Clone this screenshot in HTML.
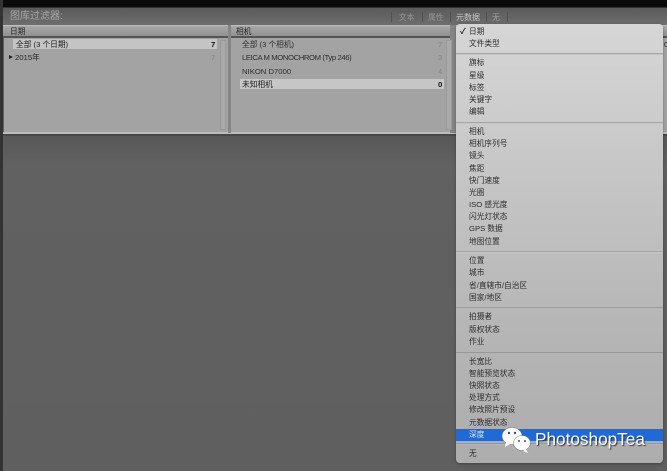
<!DOCTYPE html>
<html lang="zh"><head><meta charset="utf-8"><style>
html,body{margin:0;padding:0;background:#5f5f5f}
#p{position:relative;width:667px;height:471px;overflow:hidden;background:#5f5f5f;font-family:"Liberation Sans","Noto Sans CJK SC",sans-serif;font-size:7.7px;color:#242424}
#p div{position:absolute}
.t{white-space:nowrap;line-height:12px;height:12px;margin-top:1px;filter:blur(.3px)}
.m{left:469px;color:#2c2c2c}
.s{left:456px;width:207px;height:1px;background:#a6a6a6;border-bottom:1px solid #c6c6c6}
</style></head><body><div id="p">
<div style="left:0;top:0;width:667px;height:7px;background:#0a0a0a"></div>
<div style="left:0;top:7px;width:667px;height:1px;background:#333"></div>
<div style="left:0;top:0;width:3px;height:471px;background:#333"></div>
<div style="left:3px;top:8px;width:664px;height:17px;background:linear-gradient(#5a5a5a,#6e6e6e)"></div>
<div style="left:3px;top:25px;width:664px;height:12px;background:linear-gradient(#a8a8a8,#8f8f8f);border-top:1px solid #bcbcbc;box-sizing:border-box"></div>
<div style="left:3px;top:36px;width:664px;height:2px;background:#555"></div>
<div style="left:4px;top:38px;width:663px;height:95px;background:#a3a3a3"></div>
<div style="left:3px;top:132px;width:664px;height:2px;background:#bdbdbd"></div>
<div style="left:3px;top:134px;width:664px;height:2px;background:#484848"></div>
<div style="left:3px;top:136px;width:664px;height:335px;background:linear-gradient(#585858,#616161 30px,#5f5f5f)"></div>
<div style="left:228px;top:25px;width:3px;height:108px;background:#858585"></div>
<div style="left:450px;top:25px;width:6px;height:108px;background:#858585"></div>
<div style="left:220px;top:40px;width:6px;height:90px;background:#aaa;border:1px solid #9a9a9a;box-sizing:border-box"></div>
<div style="left:446px;top:40px;width:6px;height:90px;background:#aaa;border:1px solid #9a9a9a;box-sizing:border-box"></div>
<div class="t" style="left:10px;top:10px;font-size:10px;color:#a8a8a8">图库过滤器:</div>
<div class="t" style="left:399px;top:11px;color:#959595">文本</div>
<div class="t" style="left:428px;top:11px;color:#959595">属性</div>
<div class="t" style="left:456px;top:11px;color:#c8c8c8;font-size:8px">元数据</div>
<div class="t" style="left:492px;top:11px;color:#a0a0a0;font-size:8px">无</div>
<div style="left:391px;top:12px;width:1px;height:10px;background:#505050"></div>
<div style="left:422px;top:12px;width:1px;height:10px;background:#505050"></div>
<div style="left:450px;top:12px;width:1px;height:10px;background:#505050"></div>
<div style="left:486px;top:12px;width:1px;height:10px;background:#505050"></div>
<div style="left:507px;top:12px;width:1px;height:10px;background:#505050"></div>
<div class="t" style="left:10px;top:25px">日期</div>
<div class="t" style="left:236px;top:25px">相机</div>
<div style="left:13px;top:39px;width:204px;height:10px;background:#c4c4c4"></div>
<div class="t" style="left:16px;top:38px;color:#1c1c1c">全部 (3 个日期)</div>
<div class="t" style="left:211px;top:38px;font-weight:bold;color:#111">7</div>
<div style="left:9px;top:55px;width:0;height:0;border-left:4px solid #222;border-top:2.5px solid transparent;border-bottom:2.5px solid transparent"></div>
<div class="t" style="left:15px;top:51px">2015年</div>
<div class="t" style="left:211px;top:51px;color:#808080">7</div>
<div style="left:240px;top:79px;width:204px;height:10px;background:#c6c6c6"></div>
<div class="t" style="left:242px;top:38px;color:#2e2e2e">全部 (3 个相机)</div>
<div class="t" style="left:438px;top:38px;color:#858585">7</div>
<div class="t" style="left:242px;top:51px;color:#2e2e2e;letter-spacing:-.4px">LEICA M MONOCHROM (Typ 246)</div>
<div class="t" style="left:438px;top:51px;color:#858585">3</div>
<div class="t" style="left:242px;top:65px;color:#2e2e2e">NIKON D7000</div>
<div class="t" style="left:438px;top:65px;color:#858585">4</div>
<div class="t" style="left:242px;top:78px;color:#1c1c1c">未知相机</div>
<div class="t" style="left:438px;top:78px;font-weight:bold;color:#111">0</div>
<div class="t" style="left:664px;top:38px;color:#222">0</div>
<div style="left:456px;top:24px;width:207px;height:439px;border-radius:4px;background:linear-gradient(#d6d6d6,#c8c8c8 130px,#b6b6b6 300px,#adadad);box-shadow:0 1px 3px rgba(0,0,0,.3)"></div>
<div class="s" style="top:53px"></div>
<div class="s" style="top:122px"></div>
<div class="s" style="top:251px"></div>
<div class="s" style="top:307px;background:#9c9c9c;border-bottom-color:#b8b8b8"></div>
<div class="s" style="top:352px;background:#989898;border-bottom-color:#b4b4b4"></div>
<div class="s" style="top:443px;background:#989898;border-bottom-color:#b4b4b4"></div>
<div class="t" style="left:460px;top:25px;font-size:8px;font-weight:bold;color:#222">✓</div>
<div class="t m" style="top:25px">日期</div>
<div class="t m" style="top:37px">文件类型</div>
<div class="t m" style="top:56px">旗标</div>
<div class="t m" style="top:69px">星级</div>
<div class="t m" style="top:81px">标签</div>
<div class="t m" style="top:93px">关键字</div>
<div class="t m" style="top:105px">编辑</div>
<div class="t m" style="top:125px">相机</div>
<div class="t m" style="top:137px">相机序列号</div>
<div class="t m" style="top:149px">镜头</div>
<div class="t m" style="top:162px">焦距</div>
<div class="t m" style="top:174px">快门速度</div>
<div class="t m" style="top:186px">光圈</div>
<div class="t m" style="top:198px">ISO 感光度</div>
<div class="t m" style="top:210px">闪光灯状态</div>
<div class="t m" style="top:222px">GPS 数据</div>
<div class="t m" style="top:235px">地图位置</div>
<div class="t m" style="top:254px">位置</div>
<div class="t m" style="top:266px">城市</div>
<div class="t m" style="top:279px">省/直辖市/自治区</div>
<div class="t m" style="top:291px">国家/地区</div>
<div class="t m" style="top:310px">拍摄者</div>
<div class="t m" style="top:323px">版权状态</div>
<div class="t m" style="top:335px">作业</div>
<div class="t m" style="top:355px">长宽比</div>
<div class="t m" style="top:367px">智能预览状态</div>
<div class="t m" style="top:379px">快照状态</div>
<div class="t m" style="top:391px">处理方式</div>
<div class="t m" style="top:403px">修改照片预设</div>
<div class="t m" style="top:416px">元数据状态</div>
<div style="left:456px;top:429px;width:207px;height:12px;background:#1f6ad6"></div>
<div class="t m" style="top:428px;color:#dfe9fa">深度</div>
<div class="t m" style="top:447px">无</div>
<svg style="position:absolute;left:500px;top:426px" width="34" height="28" viewBox="0 0 34 28">
<ellipse cx="12" cy="10" rx="10" ry="8.5" fill="#fff" stroke="#555" stroke-width=".4"/>
<path d="M6 16l-1 5 5-3z" fill="#fff"/>
<ellipse cx="22" cy="17" rx="8.5" ry="7.5" fill="#fff" stroke="#555" stroke-width=".4"/>
<path d="M26 23l2 4-5-2z" fill="#fff"/>
<circle cx="9" cy="7" r="1.2" fill="#39506e"/><circle cx="15" cy="7" r="1.2" fill="#39506e"/>
<circle cx="19" cy="15" r="1" fill="#39506e"/><circle cx="25" cy="15" r="1" fill="#39506e"/>
</svg>
<div style="left:535px;top:428px;height:22px;line-height:22px;font-size:17.2px;color:#fff;white-space:nowrap;text-shadow:1px 1px 1px #333">PhotoshopTea</div>
</div></body></html>
